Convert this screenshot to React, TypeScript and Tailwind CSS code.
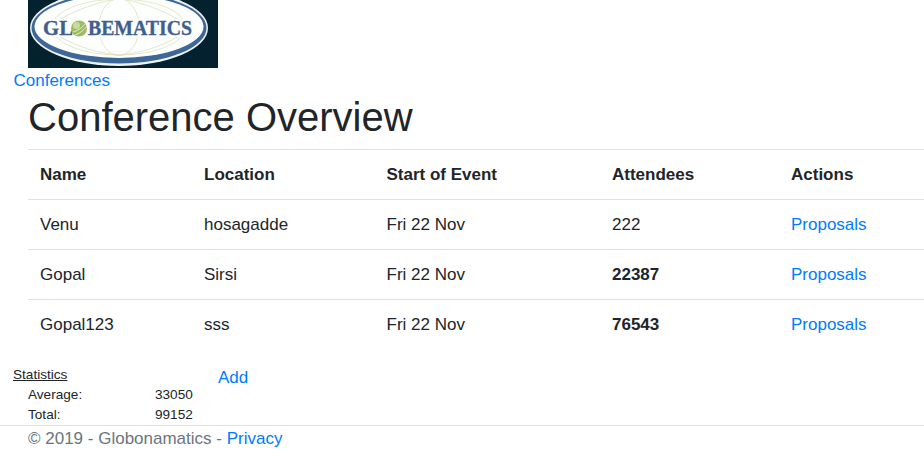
function Logo() {
  return (
    <svg width="190" height="68" viewBox="0 0 190 68" className="block" role="img" aria-label="Globematics logo">
      <rect width="190" height="68" fill="#04212f" />
      <ellipse cx="91" cy="28" rx="89" ry="38" fill="#eef2f3" />
      <ellipse cx="91" cy="28" rx="87.5" ry="35.5" fill="#3c6796" />
      <ellipse cx="91" cy="26.5" rx="84.5" ry="31.5" fill="#fdfefe" />
      <g fill="none" stroke="#d9dcb4" strokeWidth="0.7">
        <ellipse cx="91" cy="27" rx="67" ry="28" />
        <ellipse cx="91" cy="27" rx="20" ry="28.5" />
        <path d="M29 21C51 8 71 2 93 -2M153 21C131 8 111 2 89 -2M29 35C51 48 71 53 91 55M153 35C131 48 111 53 91 55" />
      </g>
      <rect x="12" y="19" width="158" height="18" fill="#fdfefe" opacity="0.8" />
      <text x="15" y="35" textLength="30" lengthAdjust="spacingAndGlyphs" fontFamily="'Liberation Serif', serif" fontWeight="700" fontSize="21" fill="#3f5f8f" stroke="#3f5f8f" strokeWidth="0.35">
        GL
      </text>
      <circle cx="51" cy="28.5" r="8" fill="#9cbb62" />
      <circle cx="48.5" cy="25.5" r="3.5" fill="#dbe8b8" opacity="0.7" />
      <path d="M45 32c4-1 9-4 13-9M47 35c4-1 9-5 12-9" stroke="#eef3dc" strokeWidth="0.9" fill="none" />
      <text x="60" y="35" textLength="104" lengthAdjust="spacingAndGlyphs" fontFamily="'Liberation Serif', serif" fontWeight="700" fontSize="21" fill="#3f5f8f" stroke="#3f5f8f" strokeWidth="0.35">
        BEMATICS
      </text>
    </svg>
  );
}

const rows = [
  { name: "Venu", location: "hosagadde", attendees: "222", bold: false },
  { name: "Gopal", location: "Sirsi", attendees: "22387", bold: true },
  { name: "Gopal123", location: "sss", attendees: "76543", bold: true },
];

export default function App() {
  return (
    <div className="w-[924px] h-[453px] overflow-hidden bg-white font-['Liberation_Sans',Arial,sans-serif] text-[17px] leading-[24px] text-[#212529]">
      <div className="pl-[28px] h-[68px]">
        <Logo />
      </div>
      <div className="pl-[13.5px] pt-[1px] h-[25px]">
        <a href="#" className="text-[#007bff]">Conferences</a>
      </div>
      <div className="pl-[28px]">
        <h1 className="text-[40px] leading-[48px] font-normal mb-[8px]">Conference Overview</h1>
        <table className="w-[896px] table-fixed border-collapse">
          <colgroup>
            <col className="w-[164px]" />
            <col className="w-[182.5px]" />
            <col className="w-[225.5px]" />
            <col className="w-[179px]" />
            <col className="w-[145px]" />
          </colgroup>
          <thead>
            <tr className="h-[50px] border-t border-[#dee2e6]">
              <th className="px-3 text-left font-bold">Name</th>
              <th className="px-3 text-left font-bold">Location</th>
              <th className="px-3 text-left font-bold">Start of Event</th>
              <th className="px-3 text-left font-bold">Attendees</th>
              <th className="px-3 text-left font-bold">Actions</th>
            </tr>
          </thead>
          <tbody>
            {rows.map((r) => (
              <tr key={r.name} className="h-[50px] border-t border-[#dee2e6]">
                <td className="px-3">{r.name}</td>
                <td className="px-3">{r.location}</td>
                <td className="px-3">Fri 22 Nov</td>
                <td className={r.bold ? "px-3 font-bold" : "px-3"}>{r.attendees}</td>
                <td className="px-3"><a href="#" className="text-[#007bff]">Proposals</a></td>
              </tr>
            ))}
          </tbody>
        </table>
      </div>
      <div className="flex pl-[13px] mt-[15px] h-[60px]">
        <div className="w-[205px] text-[13.6px] leading-[20px]">
          <div className="underline">Statistics</div>
          <div className="flex pl-[15px]"><span className="w-[127px]">Average:</span><span>33050</span></div>
          <div className="flex pl-[15px]"><span className="w-[127px]">Total:</span><span>99152</span></div>
        </div>
        <a href="#" className="text-[#007bff] mt-[1px] h-[24px]">Add</a>
      </div>
      <footer className="border-t border-[#dee2e6] pl-[28px] pt-[1px] text-[#6c757d]">
        © 2019 - Globonamatics - <a href="#" className="text-[#007bff]">Privacy</a>
      </footer>
    </div>
  );
}
